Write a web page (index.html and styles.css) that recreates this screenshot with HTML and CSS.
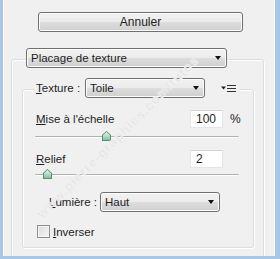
FILE: index.html
```html
<!DOCTYPE html>
<html lang="fr">
<head>
    <meta charset="UTF-8">
    <title>Placage de texture</title>
    <link rel="stylesheet" href="styles.css">
</head>
<body>
    <div class="frame">
        <button type="button" class="btn">Annuler</button>

        <div class="group outer">
            <div class="combo wide"><span>Placage de texture</span><i class="arrow"></i></div>

            <div class="group inner">
                <div class="legend">
                    <span class="lbl"><u>T</u>exture :</span>
                    <div class="combo small"><span>Toile</span><i class="arrow"></i></div>
                    <svg class="menu-icon" width="15" height="8" viewBox="0 0 15 8">
                        <path d="M0 2.5h5l-2.5 3z" fill="#222"/>
                        <path d="M6 1.5h9M6 4.5h9M6 7.5h9" stroke="#333" stroke-width="1"/>
                    </svg>
                </div>

                <div class="field first">
                    <span class="lbl name"><u>M</u>ise à l'échelle</span>
                    <input type="text" class="num" value="100">
                    <span class="unit">%</span>
                </div>
                <div class="slider">
                    <div class="track"></div>
                    <div class="thumb" style="left: 67px"></div>
                </div>

                <div class="field second">
                    <span class="lbl name"><u>R</u>elief</span>
                    <input type="text" class="num" value="2">
                </div>
                <div class="slider">
                    <div class="track"></div>
                    <div class="thumb" style="left: 8px"></div>
                </div>

                <div class="light">
                    <span class="lbl"><u>L</u>umière :</span>
                    <div class="combo small"><span>Haut</span><i class="arrow"></i></div>
                </div>

                <div class="check">
                    <span class="box"></span>
                    <span class="lbl"><u>I</u>nverser</span>
                </div>
            </div>
        </div>

        <div class="watermark">www.pierre-graphics.com/tutos</div>
    </div>
</body>
</html>
```

FILE: styles.css
```css
body {
    margin: 0;
    font-family: 'Liberation Sans', Arial, sans-serif;
    font-size: 11.5px;
    color: #1e1e1e;
    background-color: #f0f0f0;
}

.frame {
    position: relative;
    overflow: hidden;
    box-sizing: border-box;
    height: 259px;
    width: 280px;
    border-left: 3px solid #a8c6e6;
    border-right: 5px solid #a8c6e6;
    border-bottom: 3px solid #a8c6e6;
    padding-top: 12px;
    box-shadow: inset 1px 0 #fff, inset -1px 0 #fff;
}

.btn {
    display: block;
    margin-left: 35px;
    width: 205px;
    height: 20px;
    padding: 0;
    font-family: inherit;
    font-size: 12px;
    color: #1e1e1e;
    border: 1px solid #707070;
    border-radius: 3px;
    background: linear-gradient(#f2f2f2 0%, #ebebeb 50%, #dddddd 51%, #cfcfcf 100%);
    box-shadow: inset 0 0 0 1px #fcfcfc;
}

.group {
    box-sizing: border-box;
    border: 1px solid #d5dfe5;
    border-radius: 3px;
    box-shadow: inset 1px 1px #fff, 1px 1px #fff;
}

.outer {
    margin: 27px 0 0 8px;
    width: 253px;
    height: 200px;
}

.inner {
    margin: 21px 0 0 10px;
    width: 232px;
    height: 159px;
    padding-left: 13px;
}

.combo {
    box-sizing: border-box;
    display: flex;
    align-items: center;
    justify-content: space-between;
    height: 20px;
    padding: 0 5px 0 4px;
    border: 1px solid #707070;
    border-radius: 3px;
    background: linear-gradient(#f2f2f2 0%, #ebebeb 50%, #dddddd 51%, #cfcfcf 100%);
    box-shadow: inset 0 0 0 1px #fcfcfc;
}

.combo.wide {
    width: 201px;
    margin: -12px 0 0 14px;
}

.combo.small {
    width: 120px;
}

.arrow {
    width: 0;
    height: 0;
    border-left: 3.5px solid transparent;
    border-right: 3.5px solid transparent;
    border-top: 4px solid #111;
}

.legend {
    display: flex;
    align-items: center;
    gap: 5px;
    width: 204px;
    margin: -12px 0 0 -2px;
    padding-left: 2px;
    background-color: #f0f0f0;
}

.menu-icon {
    margin-left: 11px;
}

.field {
    display: flex;
    align-items: center;
    height: 18px;
}

.field.first {
    margin-top: 12px;
}

.field.second {
    margin-top: 6px;
}

.name {
    width: 154px;
}

.num {
    box-sizing: border-box;
    width: 33px;
    height: 18px;
    padding: 0 0 0 5px;
    font-family: inherit;
    font-size: 12px;
    color: #1e1e1e;
    background-color: #fff;
    border: 1px solid #e3e5ea;
    border-top-color: #d2d4da;
}

.unit {
    margin-left: 7px;
    font-size: 12px;
}

.slider {
    position: relative;
    height: 14px;
    margin-left: -1px;
    width: 204px;
}

.field.first + .slider {
    margin-top: 2px;
}

.track {
    position: absolute;
    left: 0;
    right: 0;
    top: 6px;
    height: 1px;
    background-color: #b0b0b0;
    border-bottom: 1px solid #fff;
    border-radius: 2px;
}

.thumb {
    position: absolute;
    top: 1px;
    width: 9px;
    height: 10px;
    background-color: #5d8c72;
    clip-path: polygon(50% 0, 100% 40%, 100% 100%, 0 100%, 0 40%);
}

.thumb::after {
    content: "";
    position: absolute;
    inset: 1px;
    background: linear-gradient(#eaf7ef, #82c19d);
    clip-path: polygon(50% 0, 100% 40%, 100% 100%, 0 100%, 0 40%);
}

.light {
    display: flex;
    align-items: center;
    gap: 3px;
    margin: 10px 0 0 13px;
}

.check {
    display: flex;
    align-items: center;
    gap: 3px;
    margin: 13px 0 0 1px;
}

.box {
    box-sizing: border-box;
    width: 13px;
    height: 13px;
    border: 1px solid #8e8f8f;
    background: linear-gradient(135deg, #dcdcdc, #f6f6f6);
    box-shadow: inset 0 0 0 1px #f4f4f4;
}

.watermark {
    position: absolute;
    left: 36px;
    top: 208px;
    transform: rotate(-45deg);
    transform-origin: left center;
    font-size: 13px;
    font-weight: bold;
    letter-spacing: 1px;
    color: #e6e6e6;
    text-shadow: 0 0 1px #fff;
    white-space: nowrap;
    pointer-events: none;
}
```
